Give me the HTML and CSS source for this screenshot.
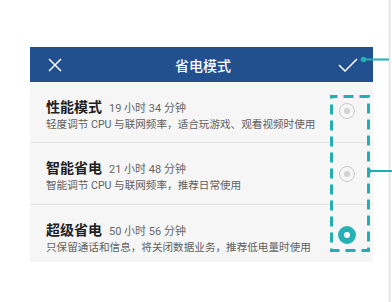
FILE: index.html
```html
<!DOCTYPE html>
<html lang="zh-CN">
<head>
<meta charset="utf-8">
<title>省电模式</title>
<link rel="stylesheet" href="styles.css">
</head>
<body>
<div class="page">
  <div class="phone">
    <header class="bar">
      <svg class="bar-icon" width="14" height="14" viewBox="0 0 14 14"><path d="M1 1 L13 13 M13 1 L1 13" stroke="#fff" stroke-width="1.5" fill="none"/></svg>
      <div class="bar-title">省电模式</div>
      <svg class="bar-icon" width="20" height="14" viewBox="0 0 20 14"><path d="M1 7 L7 13 L19 1" stroke="#fff" stroke-width="1.5" fill="none"/></svg>
    </header>
    <ul class="list">
      <li class="row">
        <div class="text">
          <div class="head"><span class="name">性能模式</span><span class="time">19 小时 34 分钟</span></div>
          <div class="desc">轻度调节 CPU 与联网频率，适合玩游戏、观看视频时使用</div>
        </div>
        <span class="radio"></span>
      </li>
      <li class="row">
        <div class="text">
          <div class="head"><span class="name">智能省电</span><span class="time">21 小时 48 分钟</span></div>
          <div class="desc">智能调节 CPU 与联网频率，推荐日常使用</div>
        </div>
        <span class="radio"></span>
      </li>
      <li class="row last">
        <div class="text">
          <div class="head"><span class="name">超级省电</span><span class="time">50 小时 56 分钟</span></div>
          <div class="desc">只保留通话和信息，将关闭数据业务，推荐低电量时使用</div>
        </div>
        <span class="radio on"></span>
      </li>
    </ul>
  </div>
  <svg class="annot" width="392" height="302" viewBox="0 0 392 302">
    <line x1="389.5" y1="0" x2="389.5" y2="302" stroke="#e4e4e4" stroke-width="2"/>
    <rect x="331.5" y="96.5" width="37" height="154" fill="none" stroke="#25aeb1" stroke-width="3" stroke-dasharray="10 6" stroke-dashoffset="4"/>
    <circle cx="363.5" cy="59.5" r="2.8" fill="#25aeb1"/>
    <line x1="363" y1="59.5" x2="389" y2="59.5" stroke="#25aeb1" stroke-width="2"/>
    <circle cx="369.5" cy="171" r="2" fill="#25aeb1"/>
    <line x1="369" y1="171" x2="392" y2="171" stroke="#25aeb1" stroke-width="2"/>
  </svg>
</div>
</body>
</html>
```
FILE: styles.css
```css
* { box-sizing: border-box; }
html, body { margin: 0; padding: 0; background: #ffffff; }
body {
  font-family: Roboto, "Noto Sans CJK SC", sans-serif;
  width: 392px;
  height: 302px;
  overflow: hidden;
}
.page {
  position: relative;
  width: 392px;
  height: 302px;
  padding: 47px 0 0 30px;
}
.phone {
  width: 343px;
}
.bar {
  height: 35px;
  background: #22508f;
  display: flex;
  align-items: center;
  justify-content: space-between;
  padding: 0 15px 0 18px;
}
.bar-title {
  color: #ffffff;
  font-size: 14px;
  font-weight: 500;
  line-height: 18px;
  font-family: "Noto Sans CJK SC", sans-serif;
  margin-left: 6px;
}
.bar-icon { display: block; }
.list {
  list-style: none;
  margin: 0;
  padding: 0;
  background: #f6f6f6;
}
.row {
  display: flex;
  align-items: flex-start;
  justify-content: space-between;
  height: 61px;
  padding: 15px 15px 0 16px;
  border-bottom: 1px solid #e4e4e4;
}
.row + .row { height: 62px; }
.row.last {
  border-bottom: none;
  height: 57px;
}
.text { display: flex; flex-direction: column; }
.head {
  display: flex;
  align-items: baseline;
  height: 18px;
  line-height: 18px;
}
.name {
  font-family: "Noto Sans CJK SC", sans-serif;
  font-size: 14px;
  font-weight: 700;
  color: #222222;
  line-height: 18px;
}
.time {
  font-size: 11px;
  color: #666666;
  margin-left: 7px;
  line-height: 18px;
}
.desc {
  font-size: 10.6px;
  height: 16px;
  line-height: 16px;
  margin-top: 2px;
  color: #616161;
}
.radio {
  align-self: center;
  width: 16px;
  height: 16px;
  border-radius: 50%;
  border: 1px solid #cacaca;
  display: flex;
  align-items: center;
  justify-content: center;
  margin-right: 3px;
  margin-top: -17px;
}
.row + .row .radio { margin-top: -15px; }
.radio::after {
  content: "";
  width: 6px;
  height: 6px;
  border-radius: 50%;
  background: #d2d2d2;
}
.row.last .radio.on {
  width: 18px;
  height: 18px;
  border: 6px solid #25b2b6;
  background: #ffffff;
  margin-right: 2px;
  margin-top: -12px;
}
.radio.on::after { display: none; }
.annot {
  position: absolute;
  left: 0;
  top: 0;
}
```
